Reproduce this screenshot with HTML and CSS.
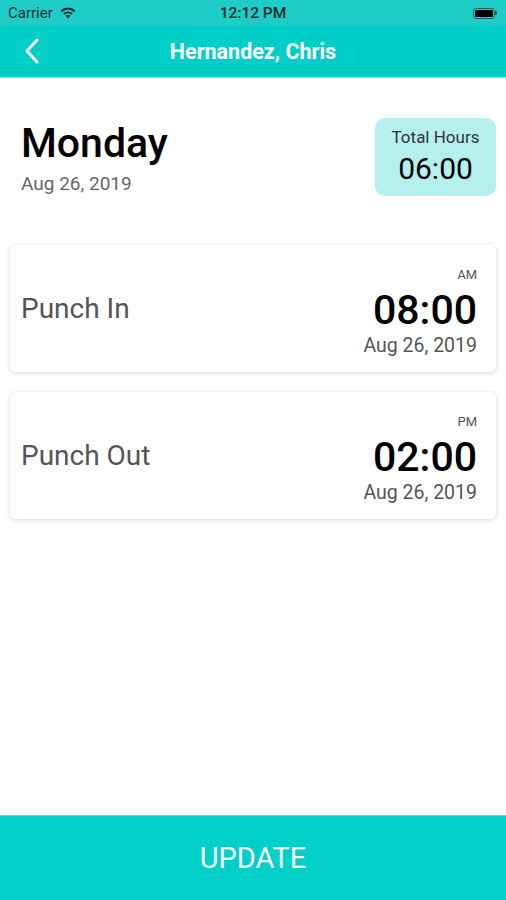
FILE: index.html
```html
<!DOCTYPE html>
<html lang="en">

<head>
    <meta charset="UTF-8">
    <meta name="viewport" content="width=device-width, initial-scale=1.0">
    <title>Hernandez, Chris</title>
    <link rel="stylesheet" href="styles.css">
</head>

<body>
    <div class="screen">
        <div class="status-bar">
            <div class="status-left">
                <span>Carrier</span>
                <svg class="wifi" width="16" height="12" viewBox="0 0 16 12">
                    <path d="M8 11.5 L5.6 8.8 A3.6 3.6 0 0 1 10.4 8.8 Z" fill="#0b2b2a" />
                    <path d="M3.2 6.4 A6.9 6.9 0 0 1 12.8 6.4 L11.5 7.8 A5 5 0 0 0 4.5 7.8 Z" fill="#0b2b2a" />
                    <path d="M0.6 3.6 A10.6 10.6 0 0 1 15.4 3.6 L14.1 5 A8.7 8.7 0 0 0 1.9 5 Z" fill="#0b2b2a" />
                </svg>
            </div>
            <div class="status-time">12:12 PM</div>
            <div class="status-right">
                <span class="battery"><span class="battery-level"></span></span>
                <span class="battery-tip"></span>
            </div>
        </div>

        <header class="nav-bar">
            <button class="back-btn" type="button" aria-label="Back">
                <svg width="16" height="26" viewBox="0 0 16 26">
                    <path d="M13 2 L3 13 L13 24" fill="none" stroke="#fff" stroke-width="3" stroke-linecap="round" stroke-linejoin="round" />
                </svg>
            </button>
            <h1 class="nav-title">Hernandez, Chris</h1>
        </header>

        <main class="content">
            <section class="day-header">
                <div class="day-info">
                    <div class="day-name">Monday</div>
                    <div class="day-date">Aug 26, 2019</div>
                </div>
                <div class="total-box">
                    <div class="total-label">Total Hours</div>
                    <div class="total-value">06:00</div>
                </div>
            </section>

            <div class="punch-card">
                <div class="punch-label">Punch In</div>
                <div class="punch-time">
                    <div class="punch-ampm">AM</div>
                    <div class="punch-clock">08:00</div>
                    <div class="punch-date">Aug 26, 2019</div>
                </div>
            </div>

            <div class="punch-card">
                <div class="punch-label">Punch Out</div>
                <div class="punch-time">
                    <div class="punch-ampm">PM</div>
                    <div class="punch-clock">02:00</div>
                    <div class="punch-date">Aug 26, 2019</div>
                </div>
            </div>
        </main>

        <button class="update-btn" type="button">UPDATE</button>
    </div>
</body>

</html>
```

FILE: styles.css
```css
body {
    font-family: Roboto, "Liberation Sans", Arial, sans-serif;
    margin: 0;
    background-color: #fff;
}

.screen {
    width: 506px;
    height: 900px;
    display: flex;
    flex-direction: column;
    background-color: #fff;
}

/* barra de status */
.status-bar {
    height: 26px;
    background-color: #1fcdc8;
    display: flex;
    align-items: center;
    justify-content: space-between;
    padding: 0 9px 0 8px;
    color: #0b2b2a;
    font-size: 15px;
    position: relative;
}

.status-left {
    display: flex;
    align-items: center;
    gap: 7px;
}

.status-time {
    position: absolute;
    left: 0;
    right: 0;
    text-align: center;
    font-size: 15.5px;
    font-weight: 500;
}

.status-right {
    display: flex;
    align-items: center;
}

.battery {
    width: 22px;
    height: 11px;
    border: 1px solid #0f6a66;
    border-radius: 3px;
    padding: 1px;
    box-sizing: border-box;
    display: flex;
}

.battery-level {
    flex: 1;
    background-color: #000;
    border-radius: 1px;
}

.battery-tip {
    width: 2px;
    height: 4px;
    background-color: #0f6a66;
    border-radius: 0 1px 1px 0;
}

/* barra de navegação */
.nav-bar {
    height: 51px;
    background-color: #00cfc8;
    display: flex;
    align-items: center;
    justify-content: center;
    position: relative;
    border-bottom: 1px solid #7fe6e2;
}

.back-btn {
    position: absolute;
    left: 24px;
    top: 12px;
    background: none;
    border: none;
    padding: 0;
    display: flex;
}

.nav-title {
    margin: 0;
    color: #fff;
    font-size: 21.5px;
    font-weight: 700;
}

.content {
    flex: 1;
    padding: 0 10px;
}

.day-header {
    display: flex;
    justify-content: space-between;
    align-items: flex-start;
    padding: 42px 0 0 11px;
    margin-bottom: 49px;
}

.day-name {
    font-size: 41px;
    font-weight: 500;
    color: #000;
    line-height: 46px;
}

.day-date {
    font-size: 19px;
    line-height: 22px;
    color: #666;
    margin-top: 7px;
}

.total-box {
    background-color: #b5f0ee;
    border-radius: 10px;
    width: 121px;
    height: 78px;
    box-sizing: border-box;
    text-align: center;
    padding-top: 9px;
    margin-top: -2px;
}

.total-label {
    font-size: 17px;
    line-height: 20px;
    color: #333;
}

.total-value {
    font-size: 30px;
    line-height: 36px;
    color: #000;
    margin-top: 4px;
}

.punch-card {
    height: 127px;
    background-color: #fff;
    border-radius: 6px;
    box-shadow: 0 1px 5px rgba(0, 0, 0, 0.16);
    display: flex;
    align-items: center;
    justify-content: space-between;
    padding: 0 19px 0 11px;
    margin-bottom: 20px;
}

.punch-label {
    font-size: 28px;
    color: #555;
}

.punch-time {
    text-align: right;
    padding-top: 7px;
}

.punch-ampm {
    font-size: 13px;
    line-height: 16px;
    color: #555;
    margin-bottom: 2px;
}

.punch-clock {
    font-size: 41px;
    font-weight: 500;
    color: #000;
    line-height: 50px;
}

.punch-date {
    font-size: 19.5px;
    line-height: 22px;
    color: #555;
}

.update-btn {
    height: 85px;
    width: 100%;
    background-color: #00d0c8;
    border: none;
    border-top: 1px solid #5fdcd7;
    color: #fff;
    font-family: Roboto, "Liberation Sans", Arial, sans-serif;
    font-size: 29px;
    padding: 0;
}
```
